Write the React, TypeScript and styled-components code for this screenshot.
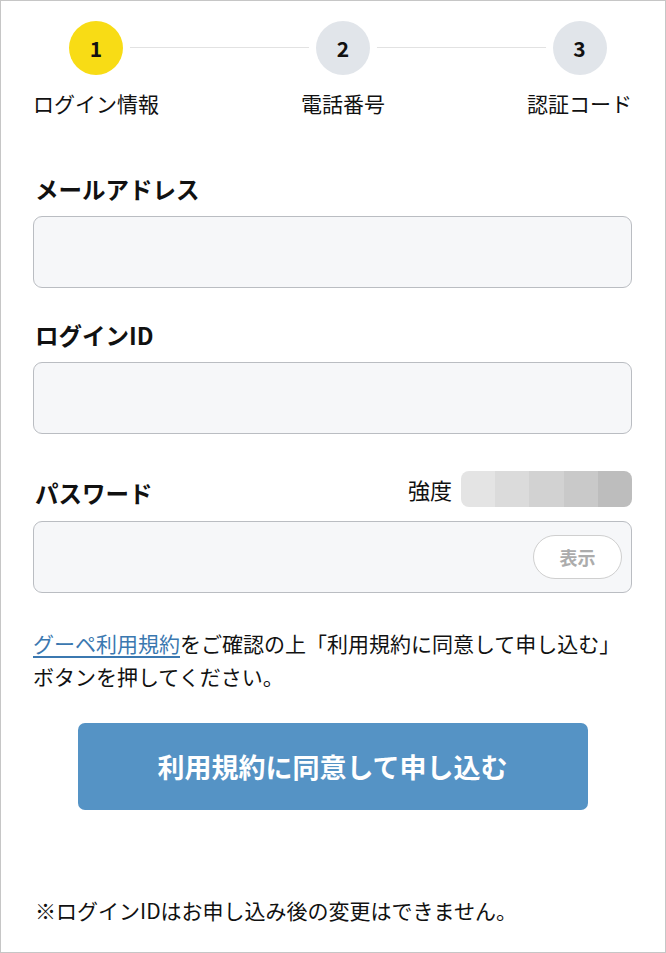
import styled, { createGlobalStyle } from 'styled-components';

const GlobalStyle = createGlobalStyle`
  body {
    margin: 0;
    background: #fff;
    font-family: "Noto Sans CJK JP", "Noto Sans", sans-serif;
    color: #111;
  }
`

const Page = styled.div`
  box-sizing: border-box;
  width: 666px;
  height: 953px;
  border: 1px solid #c6c6c6;
  padding: 20px 33px 0 32px;
`

const Steps = styled.ol`
  position: relative;
  display: flex;
  justify-content: space-between;
  margin: 0;
  padding: 0;
  list-style: none;

  &::before {
    content: '';
    position: absolute;
    top: 26px;
    left: 63px;
    right: 51px;
    height: 1px;
    background: #e2e2e2;
  }
`

const Step = styled.li`
  display: flex;
  flex-direction: column;
  align-items: center;
`

const StepCircle = styled.span<{ $active?: boolean }>`
  position: relative;
  z-index: 1;
  display: flex;
  align-items: center;
  justify-content: center;
  width: 54px;
  height: 54px;
  border-radius: 50%;
  background: ${(p) => (p.$active ? '#f8dc15' : '#e1e5ea')};
  box-shadow: 0 0 0 7px #fff;
  font-size: 21px;
  font-weight: 700;
`

const StepLabel = styled.span`
  margin-top: 13px;
  font-size: 21px;
  line-height: 30px;
  white-space: nowrap;
`

const Form = styled.form`
  display: flex;
  flex-direction: column;
  margin-top: 56px;
`

const Field = styled.div<{ $top?: number }>`
  display: flex;
  flex-direction: column;
  margin-top: ${(p) => p.$top ?? 0}px;
  margin-bottom: 32px;
`

const LabelRow = styled.div`
  display: flex;
  justify-content: space-between;
  align-items: flex-end;
`

const Label = styled.label`
  padding-left: 2px;
  font-size: 23.5px;
  font-weight: 700;
  line-height: 31px;
`

const Strength = styled.div`
  display: flex;
  align-items: center;
  gap: 9px;
  margin-bottom: 2px;
`

const StrengthText = styled.span`
  font-size: 22px;
  line-height: 36px;
`

const StrengthBar = styled.div`
  display: flex;
  width: 171px;
  height: 36px;
  border-radius: 8px;
  overflow: hidden;
`

const StrengthCell = styled.span<{ $shade: string }>`
  flex: 1;
  background: ${(p) => p.$shade};
`

const InputBox = styled.div<{ $gap?: number }>`
  position: relative;
  display: flex;
  align-items: center;
  justify-content: flex-end;
  margin-top: ${(p) => p.$gap ?? 11}px;
`

const TextInput = styled.input`
  box-sizing: border-box;
  width: 100%;
  height: 72px;
  padding: 0 16px;
  border: 1.5px solid #babdc2;
  border-radius: 9px;
  background: #f6f7f9;
  font: inherit;
  font-size: 20px;
  outline: none;
`

const ShowButton = styled.button`
  position: absolute;
  right: 10px;
  width: 89px;
  height: 44px;
  border: 1px solid #cfcfcf;
  border-radius: 22px;
  background: #fff;
  color: #acacac;
  font: inherit;
  font-size: 18px;
  font-weight: 700;
`

const Notice = styled.p`
  margin: 2px 0 0;
  font-size: 21px;
  line-height: 33px;
`

const TermsLink = styled.a`
  color: #3b78b0;
  text-decoration: underline;
  text-underline-offset: 4px;
`

const Submit = styled.button`
  align-self: center;
  width: 510px;
  height: 87px;
  margin-top: 30px;
  border: none;
  border-radius: 7px;
  background: #5593c5;
  color: #fff;
  font: inherit;
  font-size: 27px;
  font-weight: 700;
`

const Footnote = styled.p`
  margin: 85px 0 0 2px;
  font-size: 21px;
  line-height: 30px;
`

const steps = ['ログイン情報', '電話番号', '認証コード'];
const shades = ['#e4e4e4', '#dbdbdb', '#d2d2d2', '#c9c9c9', '#bdbdbd'];

const App = () => {
  return (
    <Page>
      <GlobalStyle />
      <Steps>
        {steps.map((s, i) => (
          <Step key={s}>
            <StepCircle $active={i === 0}>{i + 1}</StepCircle>
            <StepLabel>{s}</StepLabel>
          </Step>
        ))}
      </Steps>
      <Form onSubmit={(e) => e.preventDefault()}>
        <Field>
          <Label>メールアドレス</Label>
          <InputBox>
            <TextInput type="email" />
          </InputBox>
        </Field>
        <Field>
          <Label>ログインID</Label>
          <InputBox>
            <TextInput type="text" />
          </InputBox>
        </Field>
        <Field $top={5}>
          <LabelRow>
            <Label>パスワード</Label>
            <Strength>
              <StrengthText>強度</StrengthText>
              <StrengthBar>
                {shades.map((c) => (
                  <StrengthCell key={c} $shade={c} />
                ))}
              </StrengthBar>
            </Strength>
          </LabelRow>
          <InputBox $gap={12}>
            <TextInput type="password" />
            <ShowButton type="button">表示</ShowButton>
          </InputBox>
        </Field>
        <Notice>
          <TermsLink href="#">グーペ利用規約</TermsLink>をご確認の上「利用規約に同意して申し込む」ボタンを押してください。
        </Notice>
        <Submit type="submit">利用規約に同意して申し込む</Submit>
      </Form>
      <Footnote>※ログインIDはお申し込み後の変更はできません。</Footnote>
    </Page>
  );
};

export default App;
